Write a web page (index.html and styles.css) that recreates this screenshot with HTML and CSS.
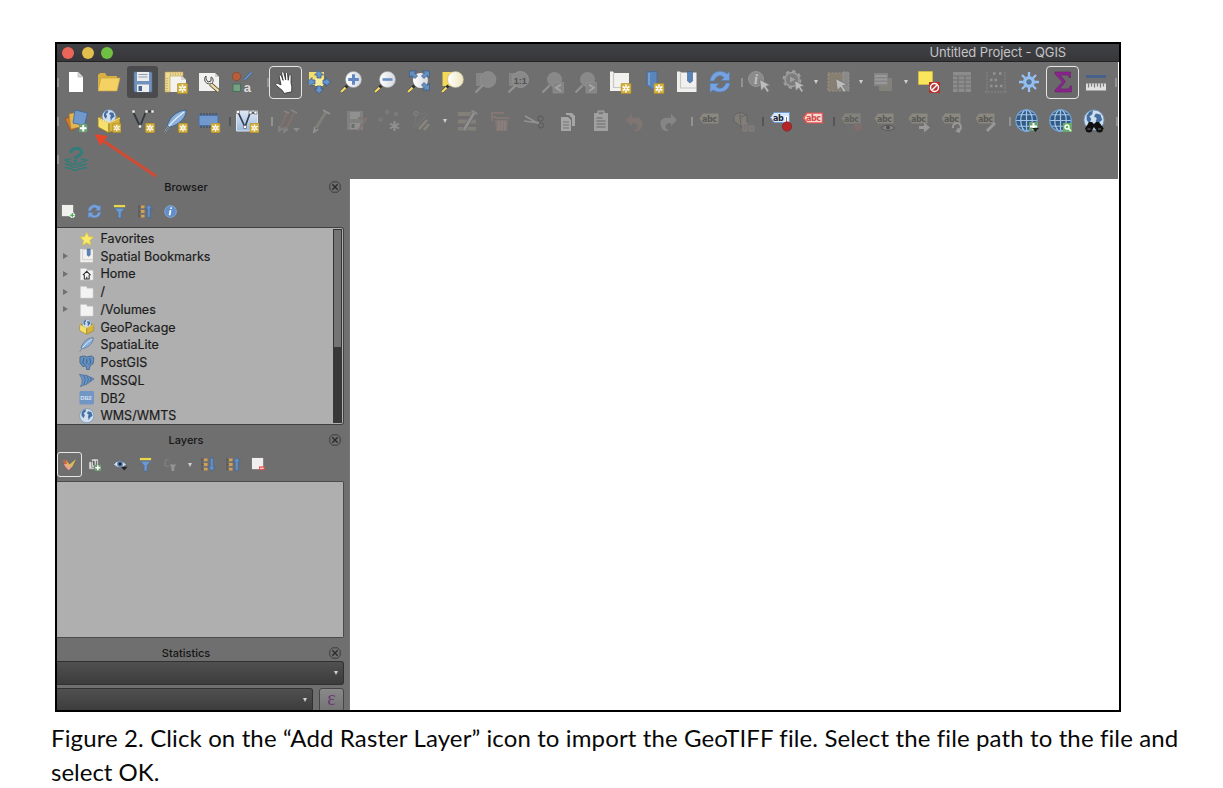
FILE: index.html
```html
<!DOCTYPE html>
<html lang="en">
<head>
<meta charset="utf-8">
<title>Untitled Project - QGIS</title>
<link rel="stylesheet" href="styles.css">
</head>
<body>
<svg class="defs" aria-hidden="true">
<defs>
<linearGradient id="lens" x1="0" x2="1"><stop offset="0" stop-color="#fff"/><stop offset="1" stop-color="#d5d8df"/></linearGradient>
<linearGradient id="cream" x1="0" x2="1"><stop offset="0" stop-color="#fff"/><stop offset="1" stop-color="#eee5bd"/></linearGradient>
<linearGradient id="paper" x1="0" y1="0" x2="0" y2="1"><stop offset="0" stop-color="#dfe7f3"/><stop offset="1" stop-color="#9bb9df"/></linearGradient>

<symbol id="star" viewBox="0 0 11 11"><rect x=".4" y=".4" width="10.2" height="10.2" rx="1.2" fill="#d3b13e" stroke="#b18f25" stroke-width=".7"/><path d="M5.5 1.6v7.8M2.1 3.5l6.8 4M8.900 3.500l-6.800 4" stroke="#fff" stroke-width="1.5"/><circle cx="5.5" cy="5.5" r=".9" fill="#d3b13e"/></symbol>
<symbol id="plus" viewBox="0 0 9 9"><rect width="9" height="9" rx="1" fill="#6b9f72"/><path d="M4.5 1v7M1 4.500h7" stroke="#fff" stroke-width="2"/></symbol>
<symbol id="cursor" viewBox="0 0 12 14"><path d="M.6.6l10.800 5.600-4.400 1 3.200 4.800-2 1.300-3.200-4.900L2.200 12z" fill="#e6e6e6" stroke="#777" stroke-width=".7"/></symbol>
<symbol id="handle" viewBox="0 0 12 12"><path d="M1 11L7.500 4.500" stroke="#2f2f2b" stroke-width="3"/><path d="M1 11L5.600 6.600" stroke="#f3d96b" stroke-width="2.400"/></symbol>
<symbol id="globe" viewBox="0 0 24 24"><circle cx="12" cy="12" r="11.200" fill="#315a85"/><path d="M12 .8v22.400M.8 12h22.400M2.800 6h18.400M2.800 18h18.400" stroke="#a5c5e6" stroke-width="1.300"/><ellipse cx="12" cy="12" rx="6" ry="11.200" fill="none" stroke="#a5c5e6" stroke-width="1.300"/><circle cx="12" cy="12" r="11.200" fill="none" stroke="#72a4d8" stroke-width="1.300"/></symbol>
<symbol id="earth" viewBox="0 0 24 24"><circle cx="12" cy="12" r="11" fill="#cfdff0" stroke="#6b8fb8"/><path d="M4 7l3-4 4-1-1 4-3 2 2 3-2 5-3-4zM14 5l5 1 2 6-4 3-2 4-1-6 1-3-3-2z" fill="#456f9f"/></symbol>
<symbol id="tag" viewBox="0 0 20 11"><path d="M.5 5.500L4 .5h15.500v10H4z"/></symbol>

<symbol id="new" viewBox="0 0 24 24"><path d="M5 2h9l5 5v15H5z" fill="#fff"/><path d="M14 2v5h5" fill="#d7d7d7" stroke="#aaa" stroke-width=".6"/></symbol>
<symbol id="open" viewBox="0 0 24 24"><path d="M1 20V5l2-2h5l2 3h10v3" fill="#d9af3f"/><path d="M1 21L4 8h19l-3 13z" fill="#f3d163" stroke="#c6a046" stroke-width=".6"/></symbol>
<symbol id="save" viewBox="0 0 24 24"><path d="M3 2h17l1 1v19H4l-1-1z" fill="#7192bd" stroke="#516f96" stroke-width=".6"/><path d="M6 2h12v9H6z" fill="#ededeb"/><path d="M7.500 4.500h9M7.500 7h9" stroke="#8d9cb2" stroke-width="1"/><path d="M6 14.500h12V22H6z" fill="#eee"/><path d="M7.500 16h3.500v5H7.500z" fill="#45658f"/></symbol>
<symbol id="layout" viewBox="0 0 24 24"><path d="M6 5h11l5 5v12H6z" fill="#f4f2ec"/><path d="M17 5v5h5" fill="#d5d5d1"/><path d="M1 2h18v4H6v16H1z" fill="#eddb9b" stroke="#b89a42" stroke-width=".6"/><path d="M3 8v13M6 4h11" stroke="#a98c3d" stroke-dasharray="1 1.500"/><use href="#star" x="13" y="13" width="11" height="11"/></symbol>
<symbol id="manager" viewBox="0 0 24 24"><path d="M2 3h16l4 4v14H2z" fill="#f1f1ef"/><path d="M18 3v4h4" fill="#ccc"/><path d="M13.500 14l8 7" stroke="#48412f" stroke-width="4"/><path d="M13.500 14l8 7" stroke="#ead9a0" stroke-width="2.400"/><path d="M9 6c-3 3-1 8 4 8 5-1 3-7 1-7l0 4-3 1-2-3z" fill="#eee" stroke="#4b4b4b"/></symbol>
<symbol id="style" viewBox="0 0 24 24"><circle cx="5.500" cy="6.500" r="4.200" fill="#b75f3a" stroke="#87452d" stroke-width=".7"/><path d="M13.500 9.500l7-7" stroke="#42658e" stroke-width="3"/><path d="M13.500 9.500l7-7" stroke="#7099cc" stroke-width="1.300"/><path d="M2 14h7.500v7.500H2z" fill="#75a182" stroke="#46705a"/><text x="12.800" y="21.800" class="glyph-a">a</text></symbol>
<symbol id="hand" viewBox="0 0 24 24"><path d="M7.500 14V5.500c0-1.800 2-1.800 2.300 0l.7 4.500V3c0-2 2.300-2 2.300 0l.3 7 1-6c.3-1.800 2.300-1.400 2.100.3L15.500 11l1.800-4.500c.7-1.500 2.400-.7 2 .8L17.700 14v4l-1.200 5H8.700l-1-3.200-4.800-6c-1.300-1.700.4-3 1.900-1.800z" transform="rotate(-12 12 12)" fill="#fff" stroke="#333" stroke-width=".8"/></symbol>
<symbol id="panto" viewBox="0 0 24 24"><path d="M2 2h15v13H2z" fill="#f4de6d"/><path d="M8 8h8v8H8z" fill="#f7ec9b"/><path d="M12 .5l4.500 4.500H14v3h-4V5H7.500zM12 23.500l4.500-4.500H14v-3h-4v3H7.500zM.5 12L5 7.500V10h3v4H5v2.500zM23.500 12L19 7.500V10h-3v4h3v2.500z" fill="#6894cf" stroke="#34577f" stroke-width=".7"/></symbol>
<symbol id="zin" viewBox="0 0 24 24"><use href="#handle" x="0" y="11" width="12" height="12"/><circle cx="13.500" cy="9.500" r="8" fill="url(#lens)" stroke="#a0a2a8" stroke-width=".6"/><path d="M13.500 4.200v10.600M8.200 9.500h10.600" stroke="#5e88bf" stroke-width="3"/></symbol>
<symbol id="zout" viewBox="0 0 24 24"><use href="#handle" x="0" y="11" width="12" height="12"/><circle cx="13.500" cy="9.500" r="8" fill="url(#lens)" stroke="#a0a2a8" stroke-width=".6"/><path d="M8.500 9.500h10" stroke="#6a90c2" stroke-width="2.600"/></symbol>
<symbol id="zfull" viewBox="0 0 24 24"><use href="#handle" x="0" y="11" width="12" height="12"/><circle cx="13.500" cy="10.500" r="7.500" fill="url(#lens)"/><path d="M2.500 1h7l-2 2 3 3L8 8.500l-3-3-2.500 2zM22.500 1h-7l2 2-3 3L17 8.500l3-3 2.500 2zM22.500 20h-7l2-2-3-3 2.500-2.500 3 3 2.500-2z" fill="#6690c4" stroke="#345984" stroke-width=".7"/></symbol>
<symbol id="zlayer" viewBox="0 0 24 24"><path d="M1.500 2h10v14h-10z" fill="#f3d957"/><use href="#handle" x="0" y="11" width="12" height="12"/><circle cx="14.500" cy="9.500" r="8" fill="url(#cream)" stroke="#b4ae8c" stroke-width=".6"/></symbol>
<symbol id="zsel" viewBox="0 0 24 24"><path d="M2 3h7v13H2z" fill="#aaa"/><path d="M1.500 22.500l7-7" stroke="#ccc" stroke-width="2.300"/><circle cx="14" cy="9.500" r="8" fill="#b5b5b5" stroke="#ccc" stroke-width=".6"/></symbol>
<symbol id="znative" viewBox="0 0 24 24"><path d="M2 3h7v13H2z" fill="#aaa"/><path d="M1.500 22.500l7-7" stroke="#ccc" stroke-width="2.300"/><circle cx="13.500" cy="9.500" r="8" fill="#b5b5b5" stroke="#ccc"/><text x="6.800" y="13.500" class="glyph-one">1:1</text></symbol>
<symbol id="zlast" viewBox="0 0 24 24"><path d="M1.500 22.500l7-7" stroke="#ccc" stroke-width="2.300"/><circle cx="13.500" cy="9.500" r="7.500" fill="#b5b5b5"/><path d="M12 12.500h10.500V23H12z" fill="#aaa" stroke="#ccc" stroke-width=".6"/><path d="M20 14.500l-5 3.300 5 3.300" fill="none" stroke="#fff" stroke-width="1.700"/></symbol>
<symbol id="znext" viewBox="0 0 24 24"><path d="M1.500 22.500l7-7" stroke="#ccc" stroke-width="2.300"/><circle cx="13.500" cy="9.500" r="7.500" fill="#b5b5b5"/><path d="M12 12.500h10.500V23H12z" fill="#aaa" stroke="#ccc" stroke-width=".6"/><path d="M15 14.500l5 3.300-5 3.300" fill="none" stroke="#fff" stroke-width="1.700"/></symbol>
<symbol id="mapview" viewBox="0 0 24 24"><path d="M2 1.500h3l1 1.500h15v18H2z" fill="#f2f1ee"/><path d="M5.500 3v14.500H21" fill="none" stroke="#c8c7c3" stroke-width="1.200"/><use href="#star" x="12.500" y="13" width="11" height="11"/></symbol>
<symbol id="bmnew" viewBox="0 0 24 24"><path d="M6 1.500h10V22l-5-3.500L6 15z" fill="#5b86bd" stroke="#406799" stroke-width=".7"/><path d="M8 3v12" stroke="#83a7d2" stroke-width="1.500"/><use href="#star" x="12.500" y="13" width="11" height="11"/></symbol>
<symbol id="bookmark" viewBox="0 0 24 24"><path d="M2 1.500h3l1 1h15.500V22H2z" fill="#f1f0ef"/><path d="M5.500 3v15h16" fill="none" stroke="#c8c8c8" stroke-width="1.200"/><path d="M12.500 1.500h5V11L15 13l-2.500-2z" fill="#5883b9" stroke="#3a5f90" stroke-width=".6"/></symbol>
<symbol id="refresh" viewBox="0 0 24 24"><path d="M2 11C3 1 14-1 19 4l2.500-2.500v9H13l3-3C12 4 8 6 6 11zM22 13c-1 9-11 11-17 7l-3 2.500v-9h9l-3 3c4 3.500 8 1.500 10-3.500z" fill="#76a3df" stroke="#537eb8" stroke-width=".6"/></symbol>
<symbol id="identify" viewBox="0 0 24 24"><circle cx="8" cy="9" r="7.500" fill="#9a9a9a" stroke="#aaa"/><text x="6" y="13.500" class="glyph-i">i</text><use href="#cursor" x="11" y="9" width="12" height="14"/></symbol>
<symbol id="action" viewBox="0 0 24 24"><circle cx="10" cy="9.500" r="8.500" fill="none" stroke="#bbb" stroke-width="1.800" stroke-dasharray="3.500 3.170"/><circle cx="10" cy="9.500" r="7" fill="#858585" stroke="#bbb" stroke-width="1.500"/><path d="M8 6.500l5.500 3-5.500 3z" fill="#bbb"/><use href="#cursor" x="12" y="10" width="11" height="13"/></symbol>
<symbol id="select" viewBox="0 0 24 24"><path d="M2 3h15v18H2z" fill="#948872" stroke="#b1a894" stroke-dasharray="2 1.500"/><path d="M17 2h6v19h-6z" fill="#999" stroke="#aaa" stroke-dasharray="2 1.500"/><use href="#cursor" x="9" y="8" width="13" height="15"/></symbol>
<symbol id="forms" viewBox="0 0 24 24"><path d="M8 8h13v13H8z" fill="#a29f8d"/><path d="M3 3h14v13H3z" fill="#aaa"/><path d="M4 6h12M4 9.500h12M4 13h12" stroke="#ddd" stroke-width="1.800"/></symbol>
<symbol id="deselect" viewBox="0 0 24 24"><path d="M1.500 1.500h14v13h-14z" fill="#fae65d" stroke="#d8bf3e" stroke-width=".7"/><path d="M12 12h11v11H12z" fill="#b7312d"/><circle cx="17.500" cy="17.500" r="4" fill="none" stroke="#fff" stroke-width="1.500"/><path d="M15 20l5-5" stroke="#fff" stroke-width="1.500"/></symbol>
<symbol id="table" viewBox="0 0 24 24"><path d="M3 2h18v20H3z" fill="#bbb"/><path d="M3 6h18M3 10h18M3 14h18M3 18h18M8 6v16M15 6v16" stroke="#777" stroke-width="1.200"/></symbol>
<symbol id="abacus" viewBox="0 0 24 24"><path d="M3 2v20M21 2v20M1 22h22" stroke="#aaa" stroke-dasharray="2 1"/><path d="M9 3.500h2.500M15 3.500h2.500M6 10h2.500M10.500 10H13M6 16h2.500M11 16h2.500M16 16h2.500" stroke="#d6cccc" stroke-width="2.500"/></symbol>
<symbol id="gear" viewBox="0 0 24 24"><path d="M12 2v20M2 12h20M5 5l14 14M19 5L5 19" stroke="#9ac1f5" stroke-width="2.300"/><circle cx="12" cy="12" r="6" fill="#8dbbf2"/><circle cx="12" cy="12" r="3.400" fill="#53769e" stroke="#c5ddf8" stroke-width=".8"/></symbol>
<symbol id="sigma" viewBox="0 0 24 24"><path d="M4 2h15.500v5.500h-1.500c-.5-2-1-2.500-3-2.500H9l5.500 6.500L8.500 19H16c2 0 2.500-1 3-3h1.500v6H4v-2l7.500-8L4 4z" fill="#8b248e" stroke="#65206b" stroke-width=".6"/></symbol>
<symbol id="ruler" viewBox="0 0 24 24"><path d="M2 6.500h20" stroke="#44618e" stroke-width="2.800"/><path d="M2 13.500h20v7H2z" fill="#e0e0e0"/><path d="M4.500 13.500v4M7.500 13.500v3M10.500 13.500v4M13.500 13.500v3M16.500 13.500v4M19.500 13.500v3" stroke="#777" stroke-width="1.200"/></symbol>

<symbol id="raster" viewBox="0 0 24 24"><path d="M1 10l8-4 5 12-7 4z" fill="#c87b35" stroke="#924e22" stroke-width=".7"/><path d="M5 5l9-2 2 15-9 2z" fill="#e5b54f" stroke="#ae7f2b" stroke-width=".6"/><path d="M11 1l12.500 3-3 12.500L9 14z" fill="#6f98cc" stroke="#3f6799" stroke-width=".8"/><use href="#plus" x="15" y="15" width="8.500" height="8.500"/></symbol>
<symbol id="gpkg" viewBox="0 0 24 24"><path d="M1 9l11-6 11 6-11 6z" fill="#a98d35"/><use href="#earth" x="4.500" y="0" width="15" height="15"/><path d="M1 9l11 5v10L1 18z" fill="#f5df6e" stroke="#927522" stroke-width=".8"/><path d="M23 9l-11 5v10l11-6z" fill="#d7b440" stroke="#8d711f" stroke-width=".8"/><path d="M1 9l11 5 11-5" fill="none" stroke="#ffe990"/></symbol>
<symbol id="gpkgnew" viewBox="0 0 24 24"><use href="#gpkg" width="24" height="24"/><use href="#star" x="15" y="14" width="9.500" height="10"/></symbol>
<symbol id="vector" viewBox="0 0 24 24"><path d="M2 2.500l7 15 6-15h6" fill="none" stroke="#303942" stroke-width="1.800"/><path d="M1 1h3v3H1zM7.500 16h3v3h-3zM14 1h3v3h-3zM20 1h3v3h-3z" fill="#eee" stroke="#666" stroke-width=".6"/><use href="#star" x="14" y="14" width="10" height="10"/></symbol>
<symbol id="feather" viewBox="0 0 24 24"><path d="M3 17C6 8 12 2 22 1c1 7-7 15-16 17z" fill="#8bb0dc" stroke="#365b88" stroke-width=".8"/><path d="M1 23C5 16 12 9 20 3" fill="none" stroke="#e2ecf7" stroke-width="1.400"/><path d="M1 23l4-6" stroke="#304d74"/></symbol>
<symbol id="feathernew" viewBox="0 0 24 24"><use href="#feather" width="24" height="24"/><use href="#star" x="14" y="14" width="10" height="10"/></symbol>
<symbol id="memory" viewBox="0 0 24 24"><path d="M4 4v15M7 4v15M10 4v15M13 4v15M16 4v15M19 4v15" stroke="#354d6c" stroke-width="1.200"/><path d="M2 6.500h19v10H2z" fill="#7199cf" stroke="#4a72a7"/><use href="#star" x="13.500" y="14" width="10" height="10"/></symbol>
<symbol id="virtual" viewBox="0 0 24 24"><path d="M1.500 2h21v20h-21z" fill="url(#paper)" stroke="#dce5f1"/><path d="M3 3l7 15 5-14h5" fill="none" stroke="#31404f" stroke-width="1.700"/><path d="M1.500 1.500h3v3h-3zM8.500 16.500h3v3h-3zM14 2h3v3h-3zM19 2h3v3h-3z" fill="#fff" stroke="#555" stroke-width=".6"/><use href="#star" x="14.500" y="14" width="10" height="10"/></symbol>
<symbol id="edits" viewBox="0 0 24 24"><path d="M3 19L10 4M9 20l8-16" stroke="#b0776b" stroke-width="2"/><path d="M2 17l0 5 4-3M8 18l-1 5 4-3M7 2l5 2M14 1l6 3" fill="none" stroke="#bbb" stroke-width="1.600"/><path d="M16 19h7l-3.500 4z" fill="#ccc"/></symbol>
<symbol id="pencil" viewBox="0 0 24 24"><path d="M5 19L15 3" stroke="#aaa58f" stroke-width="3"/><path d="M12 1l7 4M4 18l-1 5 4-3" stroke="#ddd" stroke-width="2"/></symbol>
<symbol id="savegray" viewBox="0 0 24 24"><path d="M3 2h16v19H3z" fill="#aaa"/><path d="M6 3h10v7H6zM6 14h10v6H6z" fill="#ddd"/><path d="M7.500 15h3v4h-3z" fill="#666"/><path d="M14 9l8 1-8 12" fill="none" stroke="#af8277" stroke-width="2"/></symbol>
<symbol id="points" viewBox="0 0 24 24"><g fill="#85716a" stroke="#ccc" stroke-width=".7"><circle cx="2.500" cy="10.500" r="1.500"/><circle cx="9" cy="3" r="1.500"/><circle cx="18" cy="5" r="1.500"/></g><path d="M16.500 12v10M12 14.500l9 5M21 14.500l-9 5" stroke="#ddd" stroke-width="2"/></symbol>
<symbol id="vertex" viewBox="0 0 24 24"><circle cx="5" cy="4.500" r="2" fill="none" stroke="#bbb"/><path d="M7 4.500h8M5 7L3 19M17 5L5 17" stroke="#888" stroke-width="1.200"/><path d="M8 20l8-9M13 21l5-6" stroke="#c5b8a0" stroke-width="2.600"/></symbol>
<symbol id="attrs" viewBox="0 0 24 24"><path d="M2 3h14v4H2zM2 10.500h18v4H2zM2 18h18v3.500H2z" fill="#b3aa91"/><path d="M8 21L18 4" stroke="#777" stroke-width="4.500"/><path d="M8 21L18 4" stroke="#ddd" stroke-width="2.600"/><path d="M15.500 1.500l6 3.500" stroke="#ccc" stroke-width="2"/></symbol>
<symbol id="trash" viewBox="0 0 24 24"><path d="M3 4h12M3 3v9M3 8h4" fill="none" stroke="#b5897e" stroke-width="2"/><path d="M5 8h15v2H5zM6 11h13l-1 11H7z" fill="#b5897e"/><path d="M10 12v9M13 12v9M16 12v9" stroke="#ccc"/></symbol>
<symbol id="cut" viewBox="0 0 24 24"><path d="M2 12l15 2M3 7l14 8" stroke="#ccc" stroke-width="1.500"/><circle cx="18.500" cy="9.500" r="2.600" fill="none" stroke="#333"/><circle cx="19" cy="16.500" r="2.600" fill="none" stroke="#333"/></symbol>
<symbol id="copy" viewBox="0 0 24 24"><path d="M10 4h6l3 3v10h-3V9l-3-3h-3zM5 8h7l3 3v11H5z" fill="#c4c4c4"/><path d="M7 13h6M7 16h6M7 19h6" stroke="#777" stroke-width="1.200"/></symbol>
<symbol id="paste" viewBox="0 0 24 24"><path d="M5 4h14v18H5z" fill="#bbb"/><path d="M9 2h6v4H9z" fill="#888" stroke="#ccc"/><path d="M7.500 9h6M7.500 12h9M7.500 15h9M7.500 18h9" stroke="#666"/></symbol>
<symbol id="undo" viewBox="0 0 24 24"><path d="M3 11l6-6v4c11-2 13 5 8 12-2 1-4 1-6 1 5-3 5-8-2-8v3z" fill="#a98877"/></symbol>
<symbol id="redo" viewBox="0 0 24 24"><path d="M21 11l-6-6v4C4 7 2 14 7 21c2 1 4 1 6 1-5-3-5-8 2-8v3z" fill="#bbb"/></symbol>
<symbol id="label" viewBox="0 0 24 24"><use href="#tag" x="1" y="4" width="20" height="11" fill="#b7b199"/><text x="4" y="12.500" class="glyph-abc">abc</text></symbol>
<symbol id="diagram" viewBox="0 0 24 24"><path d="M2 6l6-3 7 3v8l-6 4-7-6z" fill="#999681" stroke="#444" stroke-width=".8"/><path d="M8 3v5l1 10M8 8l7-2" fill="none" stroke="#555"/><path d="M11 14h4v8h-4zM17 17h5v5h-5z" fill="#958078" stroke="#bbb" stroke-width=".6"/></symbol>
<symbol id="labelpin" viewBox="0 0 24 24"><use href="#tag" x="1" y="3" width="20" height="11" fill="#d9e8fb" stroke="#709bd1"/><text x="4" y="11.500" class="glyph-abc solid">ab</text><path d="M17.500 7v8" stroke="#fff" stroke-width="3.500"/><path d="M17.500 8v9" stroke="#777" stroke-width="1"/><circle cx="18" cy="17.500" r="4.700" fill="#b32527" stroke="#821d21" stroke-width=".6"/></symbol>
<symbol id="labelred" viewBox="0 0 24 24"><use href="#tag" x="1" y="3.500" width="20" height="11" fill="#f7dad7" stroke="#f05450" stroke-width="1.500"/><text x="4" y="12" class="glyph-abc red">abc</text></symbol>
<symbol id="lpingray" viewBox="0 0 24 24"><use href="#label" width="24" height="24"/><circle cx="18" cy="18" r="4" fill="#a36c68"/></symbol>
<symbol id="leye" viewBox="0 0 24 24"><use href="#label" width="24" height="24"/><path d="M8 19q7-6 14 0-7 5-14 0z" fill="#aaa" stroke="#333"/><circle cx="15" cy="18.500" r="2" fill="#222"/></symbol>
<symbol id="lmove" viewBox="0 0 24 24"><use href="#label" width="24" height="24"/><path d="M12 17h5v-3.500l6 5-6 5V20h-5z" fill="#ddd"/></symbol>
<symbol id="lrot" viewBox="0 0 24 24"><use href="#label" width="24" height="24"/><path d="M13 19a4 4 0 1 1 5 3M20 23l-3-1 2-3" fill="none" stroke="#ddd" stroke-width="2"/></symbol>
<symbol id="lprop" viewBox="0 0 24 24"><use href="#label" width="24" height="24"/><path d="M13 22l8-8" stroke="#ddd" stroke-width="3"/></symbol>
<symbol id="globeadd" viewBox="0 0 24 24"><use href="#globe" x="0" y="0" width="23" height="23"/><use href="#plus" x="14" y="13" width="9" height="9"/><path d="M17 19h7l-3.500 4z" fill="#222"/></symbol>
<symbol id="globezoom" viewBox="0 0 24 24"><use href="#globe" x="0" y="0" width="23" height="23"/><path d="M14 14h9v9h-9z" fill="#67ad66"/><circle cx="18" cy="18" r="2" fill="none" stroke="#fff" stroke-width="1.400"/><path d="M19.500 19.500l2.500 2.500" stroke="#fff" stroke-width="1.500"/></symbol>
<symbol id="geocode" viewBox="0 0 24 24"><use href="#earth" x="1" y="0" width="22" height="22"/><path d="M7 13h3l2 2 2-2h3l5 7h-9l-1-2-1 2H3z" fill="#111"/><circle cx="7" cy="20" r="3.500" fill="#111"/><circle cx="17.500" cy="20" r="3.500" fill="#111"/><path d="M5.500 20h3M16 20h3" stroke="#777"/></symbol>
<symbol id="help" viewBox="0 0 24 24"><path d="M6.500 6c1-6 11-6 11-1 0 4-6 3.500-6 7" fill="none" stroke="#23807f" stroke-width="3"/><circle cx="11.500" cy="14.200" r="1.700" fill="#23807f"/><path d="M7 12l-6 1 6 3q4 3 9 0l7-3-6-1M1 17q6 1 8 3 3 1 6-1l8-2M1 20.500q6 1 8 2.500 3 1 6-1l8-1.500" fill="none" stroke="#23807f" stroke-width="1.400"/></symbol>

<symbol id="addlayer" viewBox="0 0 16 16"><path d="M1 1h12v12H1z" fill="#f0f0ed"/><path d="M12 9v6M9 12h6" stroke="#fff" stroke-width="3"/><path d="M12 9.500v5M9.500 12h5" stroke="#43a44e" stroke-width="1.300"/></symbol>
<symbol id="filter" viewBox="0 0 16 16"><path d="M2 1h12v2.500H2z" fill="#e9d74b"/><path d="M2.500 4.500h11L9.700 9v6H6.500V9z" fill="#6d99ce" stroke="#426b9c" stroke-width=".6"/></symbol>
<symbol id="treeup" viewBox="0 0 16 16"><path d="M1 1v13M1 3h3M1 8h3M1 13h3" stroke="#555" fill="none"/><path d="M3 1.500h4v3H3zM3 6.500h4v3H3zM3 11.500h4v3H3z" fill="#d0a058"/><path d="M11.500.5l4 4.500h-2.300v9.500H9.800V5H7.500z" fill="#648fc4" stroke="#385f91" stroke-width=".6"/></symbol>
<symbol id="treedown" viewBox="0 0 16 16"><path d="M1 1v13M1 3h3M1 8h3M1 13h3" stroke="#555" fill="none"/><path d="M3 1.500h4v3H3zM3 6.500h4v3H3zM3 11.500h4v3H3z" fill="#d0a058"/><path d="M11.500 15l4-4.500h-2.300V1H9.800v9.500H7.500z" fill="#648fc4" stroke="#385f91" stroke-width=".6"/></symbol>
<symbol id="info" viewBox="0 0 16 16"><circle cx="8" cy="8" r="6.300" fill="#638fc9" stroke="#8fb4e1" stroke-width=".7"/><path d="M8.800 3.500l-.3 1.700M8 6.500L7 12" stroke="#fff" stroke-width="1.800"/></symbol>
<symbol id="brush" viewBox="0 0 16 16"><path d="M1 3l4 1 3 4 3 2-4 4-4-3z" fill="#c96647"/><path d="M2 8l5 6 4-4-5-3z" fill="#e6a79e"/><path d="M4 3l4 5 7-6-4 8-4 1z" fill="#dfbb51"/></symbol>
<symbol id="group" viewBox="0 0 16 16"><path d="M2 5h6v8H2zM5 2h7v9H5z" fill="#ddd" stroke="#666" stroke-width=".7"/><path d="M7 4v5M10 4v5" stroke="#555"/><use href="#plus" x="8" y="8" width="7" height="7"/></symbol>
<symbol id="eye" viewBox="0 0 16 16"><path d="M.5 8q6-8 14 0-7 7-14 0z" fill="#ddd" stroke="#536b86"/><circle cx="7.500" cy="7.500" r="3" fill="#486f9e"/><circle cx="7.500" cy="7.500" r="1.300" fill="#16212e"/><path d="M8.500 10.500h7l-3.500 4z" fill="#222"/></symbol>
<symbol id="expr" viewBox="0 0 16 16"><path d="M6 3q-5-1-3 3-4 3 3 4" fill="none" stroke="#888" stroke-width="1.500"/><path d="M7 8h7l-2 3v4H9v-4z" fill="#aaa"/></symbol>
<symbol id="remove" viewBox="0 0 16 16"><path d="M1 1h12v12H1z" fill="#f0eeee"/><path d="M8.500 10h6v4h-6z" fill="#e65452"/><path d="M9.500 12h4" stroke="#fff"/></symbol>
<symbol id="close" viewBox="0 0 12 12"><path d="M3.500.8h5l2.700 2.700v5l-2.700 2.700h-5L.8 8.500v-5z" fill="none" stroke="#3c3c3c" stroke-width="1"/><path d="M3.300 3.300l5.400 5.400M8.700 3.300L3.300 8.700" stroke="#2c2c2c" stroke-width="1.400"/></symbol>
<symbol id="fav" viewBox="0 0 16 16"><path d="M8 1l2.100 4.800 5 .5-3.800 3.400 1.200 5.200L8 12.200 3.500 14.900l1.200-5.200L.9 6.300l5-.5z" fill="#f8ea6b" stroke="#d3b93c" stroke-width=".7"/></symbol>
<symbol id="folder" viewBox="0 0 16 16"><path d="M1.500 2.500h6l1 2h6v10h-13z" fill="#f3f3f3" stroke="#ccc" stroke-width=".6"/></symbol>
<symbol id="home" viewBox="0 0 16 16"><use href="#folder" width="16" height="16"/><path d="M4 9.500L8 5.500l4 4M5.500 9v4.500h5V9M8 13v-2" fill="none" stroke="#333" stroke-width="1.100"/></symbol>
<symbol id="pg" viewBox="0 0 16 16"><path d="M1 2l4-1 3 1 5-1 2.500 2-1 6-3 2-1 4H8l-1-4-3 1L1 8z" fill="#6792c0" stroke="#365d87" stroke-width=".8"/><path d="M5 3l-1 5 2 2M11 3l1 5-2 2M8 9V4" fill="none" stroke="#335c88"/></symbol>
<symbol id="mssql" viewBox="0 0 16 16"><path d="M.5 1.500q8 0 15 4.500-6 6-14 8 4-6-1-12.500z" fill="#6e94c4" stroke="#476a95" stroke-width=".7"/><path d="M5 2.500q3 5 0 9.500M8.500 3.500q2.500 4 0 6.500M11.500 4.500q2 2.500 0 4" fill="none" stroke="#3f6591" stroke-width=".9"/></symbol>
<symbol id="db2" viewBox="0 0 16 16"><rect x=".5" y="1" width="15" height="14" rx="1.500" fill="#7195c5"/><text x="1.300" y="10.400" class="glyph-db">DB2</text></symbol>
</defs>
</svg>

<figure class="figure">
<div class="frame">
<header class="titlebar"><span class="lights"><i class="light close-light"></i><i class="light min-light"></i><i class="light max-light"></i></span><span class="window-title">Untitled Project - QGIS</span></header>
<div class="toolbars">
<div class="toolbar first">
<span class="sep w2"></span>
<span class="tool"><svg><use href="#new"/></svg></span><span class="tool"><svg><use href="#open"/></svg></span><span class="tool pressed"><svg><use href="#save"/></svg></span><span class="tool"><svg><use href="#layout"/></svg></span><span class="tool"><svg><use href="#manager"/></svg></span><span class="tool"><svg><use href="#style"/></svg></span>
<span class="sep w9"></span>
<span class="tool active"><svg><use href="#hand"/></svg></span><span class="tool"><svg><use href="#panto"/></svg></span><span class="tool"><svg><use href="#zin"/></svg></span><span class="tool"><svg><use href="#zout"/></svg></span><span class="tool"><svg><use href="#zfull"/></svg></span><span class="tool"><svg><use href="#zlayer"/></svg></span><span class="tool dim"><svg><use href="#zsel"/></svg></span><span class="tool dim"><svg><use href="#znative"/></svg></span><span class="tool dim"><svg><use href="#zlast"/></svg></span><span class="tool dim"><svg><use href="#znext"/></svg></span><span class="tool"><svg><use href="#mapview"/></svg></span><span class="tool"><svg><use href="#bmnew"/></svg></span><span class="tool"><svg><use href="#bookmark"/></svg></span><span class="tool"><svg><use href="#refresh"/></svg></span>
<span class="sep w7"></span>
<span class="tool half"><svg><use href="#identify"/></svg></span><span class="tool half"><svg><use href="#action"/></svg></span><span class="more"></span><span class="tool half"><svg><use href="#select"/></svg></span><span class="more"></span><span class="tool dim"><svg><use href="#forms"/></svg></span><span class="more wide"></span><span class="tool"><svg><use href="#deselect"/></svg></span><span class="tool dim"><svg><use href="#table"/></svg></span><span class="tool dim"><svg><use href="#abacus"/></svg></span><span class="tool"><svg><use href="#gear"/></svg></span><span class="tool active"><svg><use href="#sigma"/></svg></span><span class="tool"><svg><use href="#ruler"/></svg></span><span class="sep w4"></span>
</div>
<div class="toolbar">
<span class="sep w2"></span>
<span class="tool"><svg><use href="#raster"/></svg></span><span class="tool"><svg><use href="#gpkgnew"/></svg></span><span class="tool"><svg><use href="#vector"/></svg></span><span class="tool"><svg><use href="#feathernew"/></svg></span><span class="tool"><svg><use href="#memory"/></svg></span>
<span class="sep w5 dark"></span><span class="tool"><svg><use href="#virtual"/></svg></span><span class="sep w8"></span>
<span class="tool faint"><svg><use href="#edits"/></svg></span><span class="tool faint"><svg><use href="#pencil"/></svg></span><span class="tool faint"><svg><use href="#savegray"/></svg></span><span class="tool faint"><svg><use href="#points"/></svg></span><span class="tool faint"><svg><use href="#vertex"/></svg></span><span class="more"></span><span class="tool faint"><svg><use href="#attrs"/></svg></span><span class="tool faint"><svg><use href="#trash"/></svg></span><span class="tool dim"><svg><use href="#cut"/></svg></span><span class="tool half"><svg><use href="#copy"/></svg></span><span class="tool half"><svg><use href="#paste"/></svg></span><span class="tool faint"><svg><use href="#undo"/></svg></span><span class="tool faint"><svg><use href="#redo"/></svg></span>
<span class="sep w8"></span><span class="tool dim"><svg><use href="#label"/></svg></span><span class="tool dim"><svg><use href="#diagram"/></svg></span><span class="sep w4 dark"></span><span class="tool"><svg><use href="#labelpin"/></svg></span><span class="tool"><svg><use href="#labelred"/></svg></span><span class="sep w4 dark"></span>
<span class="tool faint"><svg><use href="#lpingray"/></svg></span><span class="tool dim"><svg><use href="#leye"/></svg></span><span class="tool dim"><svg><use href="#lmove"/></svg></span><span class="tool dim"><svg><use href="#lrot"/></svg></span><span class="tool dim"><svg><use href="#lprop"/></svg></span>
<span class="sep w8"></span><span class="tool"><svg><use href="#globeadd"/></svg></span><span class="tool"><svg><use href="#globezoom"/></svg></span><span class="tool"><svg><use href="#geocode"/></svg></span><span class="sep w7"></span>
</div>
<div class="toolbar"><span class="sep w2"></span><span class="tool muted"><svg><use href="#help"/></svg></span></div>
<svg class="pointer" viewBox="0 0 66 46"><path d="M12 8L62 41.500" stroke="#d34a32" stroke-width="3" stroke-linecap="round"/><path d="M1.500 0l13 2L7.500 12z" fill="#e5452b"/></svg>
</div>
<div class="workspace">
<aside class="sidebar">
<section class="panel">
<h2 class="panel-title">Browser<svg class="close"><use href="#close"/></svg></h2>
<div class="mini-tools browser-tools"><svg><use href="#addlayer"/></svg><svg><use href="#refresh"/></svg><svg><use href="#filter"/></svg><svg><use href="#treeup"/></svg><svg><use href="#info"/></svg></div>
<div class="tree"><ul class="items">
<li><i></i><svg><use href="#fav"/></svg>Favorites</li>
<li><i class="arrow"></i><svg><use href="#bookmark"/></svg>Spatial Bookmarks</li>
<li><i class="arrow"></i><svg><use href="#home"/></svg>Home</li>
<li><i class="arrow"></i><svg><use href="#folder"/></svg>/</li>
<li><i class="arrow"></i><svg><use href="#folder"/></svg>/Volumes</li>
<li><i></i><svg><use href="#gpkg"/></svg>GeoPackage</li>
<li><i></i><svg><use href="#feather"/></svg>SpatiaLite</li>
<li><i></i><svg><use href="#pg"/></svg>PostGIS</li>
<li><i></i><svg><use href="#mssql"/></svg>MSSQL</li>
<li><i></i><svg><use href="#db2"/></svg>DB2</li>
<li><i></i><svg><use href="#earth"/></svg>WMS/WMTS</li>
</ul><div class="scrollbar"><div class="thumb"></div></div></div>
</section>
<section class="panel layers">
<h2 class="panel-title">Layers<svg class="close"><use href="#close"/></svg></h2>
<div class="mini-tools layer-tools"><span class="boxed"><svg><use href="#brush"/></svg></span><svg><use href="#group"/></svg><svg><use href="#eye"/></svg><svg><use href="#filter"/></svg><svg class="half"><use href="#expr"/></svg><span class="more"></span><svg><use href="#treedown"/></svg><svg><use href="#treeup"/></svg><svg><use href="#remove"/></svg></div>
<div class="layer-list"></div>
</section>
<section class="panel stats">
<h2 class="panel-title">Statistics<svg class="close"><use href="#close"/></svg></h2>
<div class="combo"><span class="more"></span></div>
<div class="stat-row"><div class="combo field"><span class="more"></span></div><div class="epsilon">ε</div></div>
</section>
</aside>
<main class="canvas"></main>
</div>
</div>
<figcaption class="caption"><span class="line one">Figure 2. Click on the “Add Raster Layer” icon to import the GeoTIFF file. Select the file path to the file and</span> <span class="line two">select OK.</span></figcaption>
</figure>
</body>
</html>
```
FILE: styles.css
```css
* { box-sizing: border-box; }
body { margin: 0; background: #fff; font-family: Inter, "Liberation Sans", sans-serif; overflow: hidden; }
.defs { position: absolute; width: 0; height: 0; }
.figure { margin: 0; padding: 42px 0 0 55px; }
.frame { width: 1066px; height: 670px; border: 2px solid #000; overflow: hidden; background: #fff; }

.titlebar { height: 18px; display: flex; justify-content: space-between; align-items: center; background: linear-gradient(#404145, #37373a); border-bottom: 1px solid #242426; padding: 0 53px 0 5px; }
.lights { display: flex; gap: 7.500px; }
.light { width: 12px; height: 12px; border-radius: 50%; }
.close-light { background: #ec6559; }
.min-light { background: #e0bf4d; }
.max-light { background: #6fc143; }
.window-title { font-size: 13px; line-height: 17px; color: #c4c4c6; letter-spacing: -.12px; white-space: nowrap; }

.toolbars { position: relative; width: 1061px; height: 117px; background: #6f6f6f; overflow: hidden; }
.toolbar { display: flex; align-items: center; height: 38px; }
.toolbar.first { height: 40px; }
.tool { flex: none; width: 33.450px; height: 32px; display: flex; align-items: center; justify-content: center; }
.tool svg { width: 24px; height: 24px; }
.pressed { background: #4b4b4d; border-radius: 3px; width: 31.450px; margin: 0 1px; }
.active { border: 1.500px solid #e6e6e6; border-radius: 4px; width: 32.450px; margin: 0 .5px; height: 33px; background: #6a6a6a; }
.muted { opacity: .8; }
.half { opacity: .65; }
.dim { opacity: .38; }
.faint { opacity: .3; }
.sep { flex: none; height: 9px; border-right: 2px solid #929292; }
.sep.dark { border-right-color: #555; }
.w2 { width: 2px; }
.w4 { width: 4px; }
.w5 { width: 4.500px; }
.w7 { width: 6.700px; }
.w8 { width: 8.400px; }
.w9 { width: 9px; }
.more { flex: none; width: 11.200px; display: flex; justify-content: center; }
.more::before { content: ""; border: 2.200px solid transparent; border-top: 4px solid #d0d0d0; border-bottom: 0; }
.more.wide { width: 12.500px; }
.pointer { position: absolute; left: 36px; top: 72px; width: 66px; height: 46px; }
.glyph-a { font: bold 13px "Liberation Sans"; fill: #ddd; }
.glyph-one { font: bold 9px "Liberation Sans"; fill: #222; }
.glyph-i { font: italic bold 14px "Liberation Serif"; fill: #eee; }
.glyph-abc { font: bold 8px "DejaVu Sans"; letter-spacing: -.5px; fill: #383838; }
.glyph-abc.red { fill: #d34a45; }
.glyph-abc.solid { fill: #22262c; }
.glyph-db { font: bold 6px "Liberation Sans"; fill: #d7e2f1; }

.workspace { display: flex; height: 531px; }
.sidebar { width: 293px; background: #6f6f6f; border-right: 1px solid #777; }
.panel-title { position: relative; margin: 0; height: 16px; width: 258px; text-align: center; font-size: 11px; line-height: 16px; font-weight: 500; color: #161616; }
.panel-title .close { position: absolute; left: 272px; top: 2px; width: 12px; height: 12px; }
.mini-tools { display: flex; align-items: center; }
.mini-tools > svg, .boxed svg { flex: none; width: 15px; height: 15px; }
.browser-tools { height: 32px; padding-left: 4px; gap: 10.600px; }
.tree { height: 198px; width: 287px; border: 1px solid #414141; border-left: 0; border-radius: 0 3px 3px 0; background: #afafaf; display: flex; justify-content: space-between; }
.items { list-style: none; margin: 0; padding: 1.500px 0 0 6px; }
.items li { height: 17.750px; display: flex; align-items: center; color: #1c1c1c; font-size: 12.500px; line-height: 17px; letter-spacing: 0; -webkit-text-stroke: .2px #1c1c1c; }
.items i { width: 16px; }
.items i.arrow::before { content: ""; display: block; width: 0; border: 3px solid transparent; border-left: 5px solid #717171; border-right: 0; }
.items svg { width: 15.500px; height: 15.500px; margin-right: 6px; }
.scrollbar { width: 9px; margin: 1px 1px 1px 0; background: #383838; }
.thumb { height: 118px; background: #747474; border: 1px solid #343434; border-bottom: 0; }

.layers { padding-top: 7px; }
.layer-tools { height: 33px; gap: 0; }
.boxed { flex: none; width: 25px; height: 25px; display: flex; align-items: center; justify-content: center; border: 1.500px solid #e6e6e6; border-radius: 3px; }
.layer-tools > svg { margin-left: 5.200px; margin-right: 5.200px; }
.layer-tools .more { width: 12px; }
.layer-list { height: 157px; width: 287px; background: #afafaf; border: 1px solid #4b4b4b; border-left: 0; border-radius: 0 2px 2px 0; }
.stats { padding-top: 7px; }
.combo { height: 24px; width: 287px; display: flex; align-items: center; justify-content: flex-end; background: linear-gradient(#505050, #3c3c3c); border: 1px solid #313131; border-left: 0; border-radius: 0 3px 3px 0; padding-right: 1px; }
.stat-row { display: flex; gap: 6px; margin-top: 3px; }
.combo.field { width: 256px; }
.epsilon { width: 25px; height: 24px; border: 1px solid #454545; border-radius: 3px; background: linear-gradient(#898989, #747474); color: #683a78; font: 20px/19px "Liberation Serif", serif; text-align: center; }
.canvas { flex: 1; background: #fff; }

.caption { margin: 8.500px 0 0 -4px; font-family: Lato, "Open Sans", sans-serif; font-size: 24px; line-height: 34px; color: #080808; }
.line { display: block; white-space: nowrap; }
.line.one { letter-spacing: .122px; font-variant-ligatures: common-ligatures; }
```
